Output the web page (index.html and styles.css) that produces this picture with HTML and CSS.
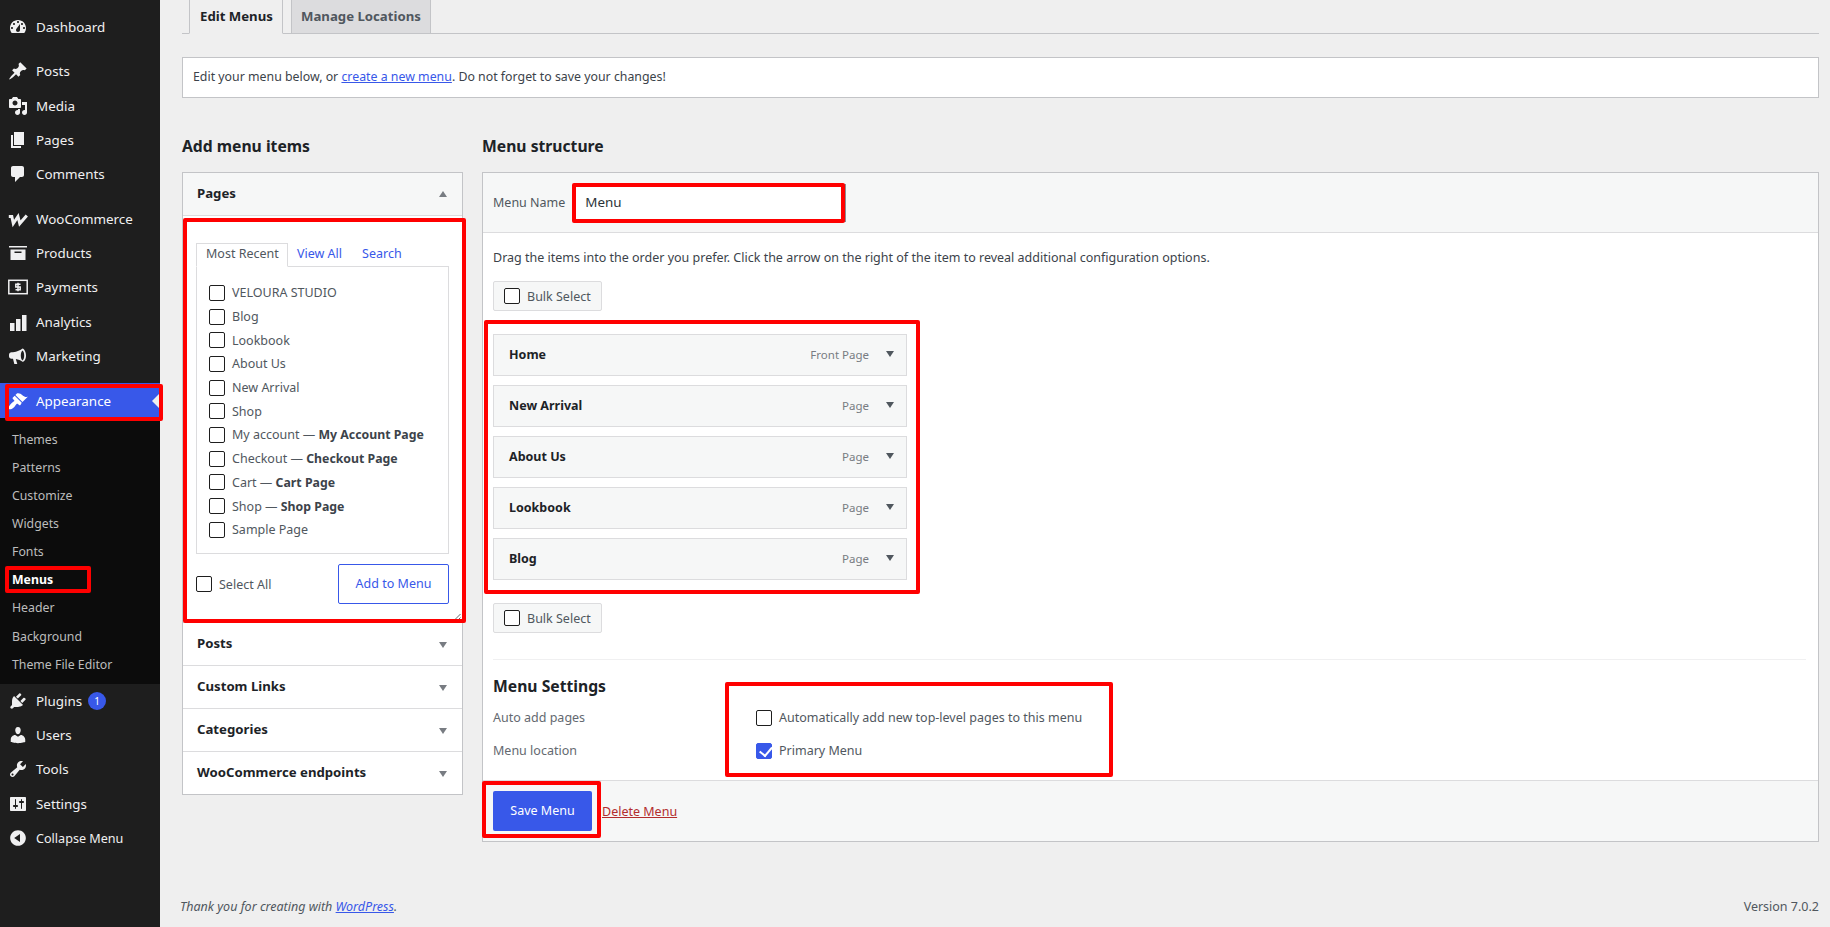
FILE: index.html
```html
<!DOCTYPE html>
<html lang="en">
	<head>
		<meta charset="utf-8">
		<title>Menus</title>
		<link rel="stylesheet" href="styles.css">
	</head>

	<body>
		<nav class="sidebar">
			<a class="nav-item first"><svg class="icon" viewBox="0 0 20 20"><path fill-rule="evenodd" d="M3.76 16h12.48c1.1-1.37 1.76-3.11 1.76-5 0-4.42-3.58-8-8-8s-8 3.58-8 8c0 1.89.66 3.63 1.76 5zM10 4c.55 0 1 .45 1 1s-.45 1-1 1-1-.45-1-1 .45-1 1-1zM6 6c.55 0 1 .45 1 1s-.45 1-1 1-1-.45-1-1 .45-1 1-1zm8 0c.55 0 1 .45 1 1s-.45 1-1 1-1-.45-1-1 .45-1 1-1zm-5.37 5.55L12 7v6c0 1.1-.9 2-2 2s-2-.9-2-2c0-.57.24-1.08.63-1.45zM4 10c.55 0 1 .45 1 1s-.45 1-1 1-1-.45-1-1 .45-1 1-1zm12 0c.55 0 1 .45 1 1s-.45 1-1 1-1-.45-1-1 .45-1 1-1z"/></svg>Dashboard</a>

			<a class="nav-item group"><svg class="icon" viewBox="0 0 20 20"><path d="M10.44 3.02l1.82-1.82 6.36 6.35-1.83 1.82c-1.05-.68-2.48-.57-3.41.36l-.75.75c-.92.93-1.04 2.35-.35 3.41l-1.83 1.82-2.41-2.41-2.8 2.79c-.42.42-3.38 2.71-3.8 2.29s1.86-3.39 2.28-3.81l2.79-2.79L4.1 9.36l1.83-1.82c1.05.69 2.48.57 3.4-.36l.75-.75c.93-.92 1.05-2.35.36-3.41z"/></svg>Posts</a>
			<a class="nav-item"><svg class="icon" viewBox="0 0 20 20"><path fill-rule="evenodd" d="M13 11V4c0-.55-.45-1-1-1h-1.67L9 1H5L3.67 3H2c-.55 0-1 .45-1 1v7c0 .55.45 1 1 1h10c.55 0 1-.45 1-1zM7 4.5c1.38 0 2.5 1.12 2.5 2.5S8.38 9.5 7 9.5 4.5 8.38 4.5 7 5.62 4.5 7 4.5zM14 6h5v10.5c0 1.38-1.12 2.5-2.5 2.5S14 17.88 14 16.5s1.12-2.5 2.5-2.5c.17 0 .34.02.5.05V9h-3V6zm-4 8.05V13h2v3.5c0 1.38-1.12 2.5-2.5 2.5S7 17.88 7 16.5 8.12 14 9.5 14c.17 0 .34.02.5.05z"/></svg>Media</a>
			<a class="nav-item"><svg class="icon" viewBox="0 0 20 20"><path d="M6 15V2h10v13H6zm-1 1h8v2H3V5h2v11z"/></svg>Pages</a>
			<a class="nav-item"><svg class="icon" viewBox="0 0 20 20"><path d="M5 2h9c1.1 0 2 .9 2 2v7c0 1.1-.9 2-2 2h-2l-5 5v-5H5c-1.1 0-2-.9-2-2V4c0-1.1.9-2 2-2z"/></svg>Comments</a>

			<a class="nav-item group"><svg class="icon" viewBox="0 0 20 20"><path class="woo" d="M.8 7.5h3l1.500 7L10 7.500l1.800 7L18.800 6.500"/></svg>WooCommerce</a>
			<a class="nav-item"><svg class="icon" viewBox="0 0 20 20"><path fill-rule="evenodd" d="M1 3h18v1.600H1zM2.500 6.500h15V17h-15zM6.500 8.500v1.500h7V8.500z"/></svg>Products</a>
			<a class="nav-item"><svg class="icon" viewBox="0 0 20 20"><rect class="pay-frame" x="0.8" y="3.300" width="18.400" height="13.400"/><path class="pay-sign" d="M12.500 7.300H7.800v2.700h4.400v2.700H7.500M10 5.800v8.400"/></svg>Payments</a>
			<a class="nav-item"><svg class="icon" viewBox="0 0 20 20"><rect x="2" y="11" width="4.500" height="8"/><rect x="8" y="7" width="4.500" height="12"/><rect x="14" y="3" width="4.500" height="16"/></svg>Analytics</a>
			<a class="nav-item"><svg class="icon" viewBox="0 0 20 20"><path fill-rule="evenodd" d="M14.5 2.5c-2 1.6-5.500 3.300-9.500 3.700H3.500C2.100 6.200 1 7.300 1 8.700v1.600c0 1.400 1.100 2.500 2.500 2.500H5l1.300 5.200h3l-1.500-5c2.600.4 4.900 1.400 6.700 2.800 1.900 0 3.500-2.900 3.500-6.300s-1.600-6.500-3.500-7zm0 2c.9.500 1.700 2.400 1.700 5s-.8 4.500-1.700 5c-.9-.5-1.700-2.400-1.700-5s.8-4.500 1.700-5z"/></svg>Marketing</a>

			<a class="nav-item group current"><svg class="icon" viewBox="0 0 20 20"><path d="M14.48 11.06L7.41 3.99l1.5-1.5c.5-.56 2.3-.47 3.51.32 1.21.8 1.43 1.28 2.91 2.1 1.18.64 2.45 1.26 4.45.85zm-.71.71L6.7 4.7 4.93 6.47c-.39.39-.39 1.02 0 1.41l1.06 1.06c.39.39.39 1.03 0 1.42-.6.6-1.43 1.11-2.21 1.69-.35.26-.7.53-1.01.84-1.43 1.43-2.87 3.98-1.79 5.06 1.08 1.08 3.63-.36 5.06-1.79.31-.31.58-.66.84-1.01.58-.78 1.09-1.61 1.69-2.21.39-.39 1.02-.39 1.41 0l1.06 1.06c.39.39 1.02.39 1.41 0z"/></svg>Appearance</a>
			<div class="submenu">
				<a>Themes</a>
				<a>Patterns</a>
				<a>Customize</a>
				<a>Widgets</a>
				<a>Fonts</a>
				<a class="active">Menus</a>
				<a>Header</a>
				<a>Background</a>
				<a>Theme File Editor</a>
			</div>
			<a class="nav-item"><svg class="icon" viewBox="0 0 20 20"><path d="M13.11 4.36L9.87 7.6 8 5.73l3.24-3.24c.35-.34 1.05-.2 1.56.32.52.51.66 1.21.31 1.55zm-8 1.77l.91-1.12 9.01 9.01-1.19.84c-.71.71-2.63 1.16-3.82 1.16H6.14L4.9 17.26c-.59.59-1.54.59-2.12 0-.59-.58-.59-1.53 0-2.12l1.24-1.24v-3.88c0-1.13.4-3.19 1.09-3.89zm7.26 3.97l3.24-3.24c.34-.35 1.04-.21 1.55.31.52.51.66 1.21.31 1.55l-3.24 3.25z"/></svg>Plugins<span class="count">1</span></a>
			<a class="nav-item"><svg class="icon" viewBox="0 0 20 20"><path d="M10 9.25c-2.27 0-2.73-3.44-2.73-3.44C7 4.02 7.82 2 9.97 2c2.16 0 2.98 2.02 2.71 3.81 0 0-.41 3.44-2.68 3.44zm0 2.57L12.72 10c2.39 0 4.52 2.33 4.52 4.53v2.49s-3.65 1.13-7.24 1.13c-3.65 0-7.24-1.13-7.24-1.13v-2.49c0-2.25 1.94-4.48 4.47-4.48z"/></svg>Users</a>
			<a class="nav-item"><svg class="icon" viewBox="0 0 20 20"><path fill-rule="evenodd" d="M16.68 9.77c-1.34 1.34-3.3 1.67-4.95.99l-5.41 6.52c-.99.99-2.59.99-3.58 0s-.99-2.59 0-3.57l6.52-5.42c-.68-1.65-.35-3.61.99-4.95 1.28-1.28 3.12-1.62 4.72-1.06l-2.89 2.89 2.82 2.82 2.86-2.87c.53 1.58.18 3.39-1.08 4.65zM3.81 16.21c.4.39 1.04.39 1.43 0 .4-.4.4-1.04 0-1.43-.39-.4-1.03-.4-1.43 0-.39.39-.39 1.03 0 1.43z"/></svg>Tools</a>
			<a class="nav-item"><svg class="icon" viewBox="0 0 20 20"><path fill-rule="evenodd" d="M18 16V4c0-.55-.45-1-1-1H3c-.55 0-1 .45-1 1v12c0 .55.45 1 1 1h14c.55 0 1-.45 1-1zM8 11h1c.55 0 1 .45 1 1s-.45 1-1 1H8v1.500c0 .28-.22.5-.5.5s-.5-.22-.5-.5V13H6c-.55 0-1-.45-1-1s.45-1 1-1h1V5.500c0-.28.22-.5.5-.5s.5.22.5.5V11zm5-2h-1c-.55 0-1-.45-1-1s.45-1 1-1h1V5.500c0-.28.22-.5.5-.5s.5.22.5.5V7h1c.55 0 1 .45 1 1s-.45 1-1 1h-1v5.500c0 .28-.22.5-.5.5s-.5-.22-.5-.5V9z"/></svg>Settings</a>
			<a class="nav-item collapse"><svg class="icon" viewBox="0 0 20 20"><path fill-rule="evenodd" d="M10 2.16c4.33 0 7.84 3.51 7.84 7.84s-3.51 7.84-7.84 7.84S2.160 14.33 2.160 10 5.710 2.160 10 2.160zm2 11.720V6.120L6.180 9.970z"/></svg>Collapse Menu</a>
		</nav>

		<main class="content">
			<div class="page-tabs">
				<a class="page-tab selected">Edit Menus</a>
				<a class="page-tab">Manage Locations</a>
			</div>

			<div class="notice">Edit your menu below, or <a class="link" href="#">create a new menu</a>. Do not forget to save your changes!</div>

			<div class="columns">
				<section class="col-left">
					<h2>Add menu items</h2>
					<div class="accordion">
						<div class="acc-head open">Pages<span class="arrow up"></span></div>
						<div class="acc-body">
							<div class="mini-tabs">
								<a class="mini-tab selected">Most Recent</a>
								<a class="mini-tab">View All</a>
								<a class="mini-tab">Search</a>
							</div>
							<div class="page-list">
								<label class="row"><input type="checkbox">VELOURA STUDIO</label>
								<label class="row"><input type="checkbox">Blog</label>
								<label class="row"><input type="checkbox">Lookbook</label>
								<label class="row"><input type="checkbox">About Us</label>
								<label class="row"><input type="checkbox">New Arrival</label>
								<label class="row"><input type="checkbox">Shop</label>
								<label class="row"><input type="checkbox"><span>My account — <b>My Account Page</b></span></label>
								<label class="row"><input type="checkbox"><span>Checkout — <b>Checkout Page</b></span></label>
								<label class="row"><input type="checkbox"><span>Cart — <b>Cart Page</b></span></label>
								<label class="row"><input type="checkbox"><span>Shop — <b>Shop Page</b></span></label>
								<label class="row"><input type="checkbox">Sample Page</label>
							</div>
							<div class="add-row">
								<label class="row"><input type="checkbox">Select All</label>
								<button class="btn-outline">Add to Menu</button>
							</div>
							<svg class="grip" viewBox="0 0 8 8"><path d="M7.500 1L1 7.500M7.500 4.500L4.500 7.500"/></svg>
						</div>
						<div class="acc-head">Posts<span class="arrow"></span></div>
						<div class="acc-head">Custom Links<span class="arrow"></span></div>
						<div class="acc-head">Categories<span class="arrow"></span></div>
						<div class="acc-head">WooCommerce endpoints<span class="arrow"></span></div>
					</div>
				</section>

				<section class="col-right">
					<h2>Menu structure</h2>
					<div class="panel">
						<div class="panel-head">
							<label class="name-label" for="menu-name">Menu Name</label>
							<input id="menu-name" class="name-input" type="text" value="Menu">
						</div>
						<div class="panel-body">
							<p class="hint">Drag the items into the order you prefer. Click the arrow on the right of the item to reveal additional configuration options.</p>
							<label class="bulk"><input type="checkbox">Bulk Select</label>
							<ul class="items">
								<li class="item"><b>Home</b><span class="item-type">Front Page</span><span class="caret"></span></li>
								<li class="item"><b>New Arrival</b><span class="item-type">Page</span><span class="caret"></span></li>
								<li class="item"><b>About Us</b><span class="item-type">Page</span><span class="caret"></span></li>
								<li class="item"><b>Lookbook</b><span class="item-type">Page</span><span class="caret"></span></li>
								<li class="item"><b>Blog</b><span class="item-type">Page</span><span class="caret"></span></li>
							</ul>
							<label class="bulk"><input type="checkbox">Bulk Select</label>
							<div class="settings">
								<h3>Menu Settings</h3>
								<div class="setting">
									<span class="setting-name">Auto add pages</span>
									<label class="row"><input type="checkbox">Automatically add new top-level pages to this menu</label>
								</div>
								<div class="setting">
									<span class="setting-name">Menu location</span>
									<label class="row"><input type="checkbox" checked>Primary Menu</label>
								</div>
							</div>
						</div>
						<div class="panel-foot">
							<button class="btn-primary">Save Menu</button>
							<a class="delete" href="#">Delete Menu</a>
						</div>
					</div>
				</section>
			</div>

			<footer class="page-foot">
				<em>Thank you for creating with <a class="link" href="#">WordPress</a>.</em>
				<span>Version 7.0.2</span>
			</footer>
		</main>

		<div class="mark mark-appearance"></div>
		<div class="mark mark-menus"></div>
		<div class="mark mark-pages"></div>
		<div class="mark mark-name"></div>
		<div class="mark mark-items"></div>
		<div class="mark mark-settings"></div>
		<div class="mark mark-save"></div>
	</body>
</html>
```

FILE: styles.css
```css
* {
	box-sizing: border-box;
}

html, body {
	height: 100%;
}

body {
	position: relative;
	display: flex;
	margin: 0;
	overflow: hidden;
	background-color: #efefef;
	color: #3c434a;
	font-family: "Noto Sans", sans-serif;
	font-size: 12.5px;
}

a {
	cursor: pointer;
}

h2 {
	margin: 0 0 13px;
	height: 26px;
	color: #1d2327;
	font-size: 15.7px;
	font-weight: 700;
	line-height: 26px;
}

/* sidebar */
.sidebar {
	flex: none;
	width: 160px;
	padding-top: 10px;
	background-color: #1e1e1e;
}

.nav-item {
	position: relative;
	display: flex;
	align-items: center;
	height: 34.33px;
	padding-left: 8px;
	color: #f0f0f1;
	font-size: 13.4px;
}

.nav-item.group {
	margin-top: 10px;
}

.nav-item.current {
	padding-top: 1px;
	background-color: #3858e9;
	color: #fff;
}

.nav-item.current::after {
	content: "";
	position: absolute;
	right: 0;
	top: 10px;
	border: 8px solid transparent;
	border-left: 0;
	border-right-color: #efefef;
}

.nav-item.collapse {
	font-size: 12.6px;
}

.icon {
	flex: none;
	width: 20px;
	height: 20px;
	margin-right: 8px;
	fill: #f0f0f1;
}

.current .icon {
	fill: #fff;
}

.woo {
	fill: none;
	stroke: #f0f0f1;
	stroke-width: 3;
}

.pay-frame {
	fill: none;
	stroke: #f0f0f1;
	stroke-width: 1.500;
}

.pay-sign {
	fill: none;
	stroke: #f0f0f1;
	stroke-width: 1.500;
}

.count {
	display: flex;
	align-items: center;
	justify-content: center;
	width: 18px;
	height: 18px;
	margin-left: 6px;
	border-radius: 50%;
	background-color: #3858e9;
	color: #fff;
	font-size: 10px;
}

.submenu {
	display: flex;
	flex-direction: column;
	height: 266px;
	padding: 8px 0 0;
	background-color: #0c0c0c;
}

.submenu a {
	flex: none;
	height: 28.15px;
	padding-left: 12px;
	color: #bdbdbd;
	font-size: 12.3px;
	line-height: 28px;
}

.submenu .active {
	color: #fff;
	font-weight: 700;
}

/* page */
.content {
	flex: 1;
	display: flex;
	flex-direction: column;
	min-width: 0;
	padding: 0 11px 0 22px;
}

.page-tabs {
	display: flex;
	flex: none;
	height: 34px;
	padding-left: 7px;
	border-bottom: 1px solid #c3c4c7;
}

.page-tab {
	height: 34px;
	margin-right: 8px;
	padding: 0 9px;
	border: 1px solid #c3c4c7;
	border-top: 0;
	background-color: #dcdcde;
	color: #50575e;
	font-size: 13.2px;
	font-weight: 700;
	line-height: 32px;
	white-space: nowrap;
}

.page-tab.selected {
	width: 94px;
	padding: 0 10px;
	border-bottom-color: #efefef;
	background-color: #efefef;
	color: #1d2327;
}

.notice {
	flex: none;
	height: 41px;
	margin-top: 23px;
	padding: 0 10px;
	border: 1px solid #c3c4c7;
	background-color: #fff;
	font-size: 12.35px;
	line-height: 38px;
}

.link {
	color: #3858e9;
	text-decoration: underline;
}

.columns {
	display: flex;
	flex: none;
	gap: 19px;
	margin-top: 35px;
}

.col-left {
	flex: none;
	width: 281px;
}

.col-right {
	flex: 1;
}

/* left accordion */
.accordion {
	border: 1px solid #c3c4c7;
	background-color: #fff;
}

.acc-head {
	display: flex;
	align-items: center;
	justify-content: space-between;
	height: 43px;
	padding: 0 15px 2px 14px;
	border-top: 1px solid #dcdcde;
	color: #1d2327;
	font-size: 13.2px;
	font-weight: 700;
}

.acc-head:first-child {
	height: 42px;
	border-top: 0;
	background-color: #f6f7f7;
}

.arrow {
	margin-top: 3px;
	border: 4px solid transparent;
	border-top: 6px solid #787c82;
	border-bottom: 0;
}

.arrow.up {
	margin-top: 2px;
	border-top: 0;
	border-bottom: 6px solid #787c82;
}

.acc-body {
	position: relative;
	height: 407px;
	padding: 27px 13px 0;
	border-top: 1px solid #dcdcde;
}

.mini-tabs {
	display: flex;
	position: relative;
	z-index: 1;
	height: 24px;
}

.mini-tab {
	padding: 0 9px;
	color: #3858e9;
	font-size: 12.5px;
	line-height: 22px;
}

.mini-tab:last-child {
	padding-left: 11px;
}

.mini-tab.selected {
	width: 92px;
	border: 1px solid #dcdcde;
	border-bottom-color: #fff;
	color: #50575e;
	white-space: nowrap;
	line-height: 20px;
}

.page-list {
	height: 288px;
	margin-top: -1px;
	padding: 14px 0 0 12px;
	border: 1px solid #dcdcde;
}

.page-list .row {
	height: 23.7px;
}

.row {
	display: flex;
	align-items: center;
	color: #50575e;
	white-space: nowrap;
}

b {
	font-weight: 700;
	font-size: 12.3px;
}

.row b {
	color: #3c434a;
}

input[type="checkbox"] {
	appearance: none;
	flex: none;
	position: relative;
	width: 16px;
	height: 16px;
	margin: 0 7px 0 0;
	border: 1px solid #1e1e1e;
	border-radius: 2px;
	background-color: #fff;
}

input[type="checkbox"]:checked {
	border-color: #3858e9;
	background-color: #3858e9;
}

input[type="checkbox"]:checked::before {
	content: "";
	position: absolute;
	left: 4.5px;
	top: 0.5px;
	width: 5.5px;
	height: 10px;
	border: solid #fff;
	border-width: 0 2.2px 2.2px 0;
	transform: rotate(40deg);
}

.add-row {
	display: flex;
	align-items: center;
	justify-content: space-between;
	margin-top: 10px;
}

.btn-outline {
	width: 111px;
	height: 40px;
	padding-bottom: 2px;
	border: 1px solid #3858e9;
	border-radius: 2px;
	background-color: #fff;
	color: #3858e9;
	font: inherit;
}

.grip {
	position: absolute;
	right: 1px;
	bottom: 1px;
	width: 8px;
	height: 8px;
	fill: none;
	stroke: #646970;
	stroke-width: 1;
}

/* right panel */
.panel {
	height: 670px;
	display: flex;
	flex-direction: column;
	border: 1px solid #c3c4c7;
	background-color: #fff;
}

.panel-head {
	display: flex;
	flex: none;
	align-items: center;
	height: 60px;
	padding-left: 10px;
	border-bottom: 1px solid #dcdcde;
	background-color: #f6f7f7;
}

.name-label {
	color: #50575e;
}

.name-input {
	width: 271px;
	height: 38px;
	margin-left: 10px;
	padding: 0 9px 2px;
	border: 1px solid #8c8f94;
	background-color: #fff;
	color: #2c3338;
	font: inherit;
	font-size: 13.4px;
}

.panel-body {
	flex: 1;
	padding: 0 12px 0 10px;
}

.hint {
	height: 20px;
	margin: 15px 0 13px;
	line-height: 20px;
}

.bulk {
	display: flex;
	align-items: center;
	width: 109px;
	height: 30px;
	padding-left: 10px;
	border: 1px solid #dcdcde;
	border-radius: 2px;
	background-color: #f6f7f7;
	color: #50575e;
	white-space: nowrap;
}

.items {
	display: flex;
	flex-direction: column;
	gap: 9px;
	margin: 23px 0;
	padding: 0;
	list-style: none;
}

.item {
	display: flex;
	align-items: center;
	width: 414px;
	height: 42px;
	padding: 0 12px 2px 15px;
	border: 1px solid #dcdcde;
	background-color: #f6f7f7;
	color: #1d2327;
}

.item b {
	font-size: 12.5px;
}

.item-type {
	margin-left: auto;
	margin-right: 17px;
	color: #787c82;
	font-size: 11.5px;
}

.caret {
	border: 4px solid transparent;
	border-top: 6px solid #50575e;
	border-bottom: 0;
}

.settings {
	margin-top: 26px;
	padding-top: 14px;
	border-top: 1px solid #f0f0f1;
}

h3 {
	margin: 0 0 3px;
	height: 24px;
	color: #1d2327;
	font-size: 15.7px;
	font-weight: 700;
	line-height: 24px;
}

.setting {
	display: flex;
	align-items: center;
	height: 33px;
}

.setting-name {
	width: 263px;
	color: #646970;
}

.panel-foot {
	display: flex;
	flex: none;
	align-items: center;
	gap: 10px;
	height: 61px;
	padding-left: 10px;
	border-top: 1px solid #dcdcde;
	background-color: #f6f7f7;
}

.btn-primary {
	width: 99px;
	height: 40px;
	padding-bottom: 2px;
	border: 0;
	border-radius: 2px;
	background-color: #3858e9;
	color: #fff;
	font: inherit;
}

.delete {
	color: #b32d2e;
	text-decoration: underline;
}

.page-foot {
	display: flex;
	flex: none;
	justify-content: space-between;
	margin: auto 0 0 -2px;
	padding-bottom: 10px;
	color: #50575e;
	line-height: 20px;
}

/* red annotation boxes drawn on top of the screenshot */
.mark {
	position: absolute;
	border: 4px solid #f00;
	border-radius: 2px;
	pointer-events: none;
}

.mark-appearance {
	left: 5px;
	top: 384px;
	width: 158px;
	height: 37px;
}

.mark-menus {
	left: 5px;
	top: 566px;
	width: 86px;
	height: 27px;
}

.mark-pages {
	left: 183px;
	top: 218px;
	width: 283px;
	height: 405px;
}

.mark-name {
	left: 572px;
	top: 183px;
	width: 273px;
	height: 40px;
}

.mark-items {
	left: 484px;
	top: 320px;
	width: 436px;
	height: 274px;
}

.mark-settings {
	left: 725px;
	top: 682px;
	width: 388px;
	height: 95px;
}

.mark-save {
	left: 482px;
	top: 781px;
	width: 119px;
	height: 57px;
}
```
